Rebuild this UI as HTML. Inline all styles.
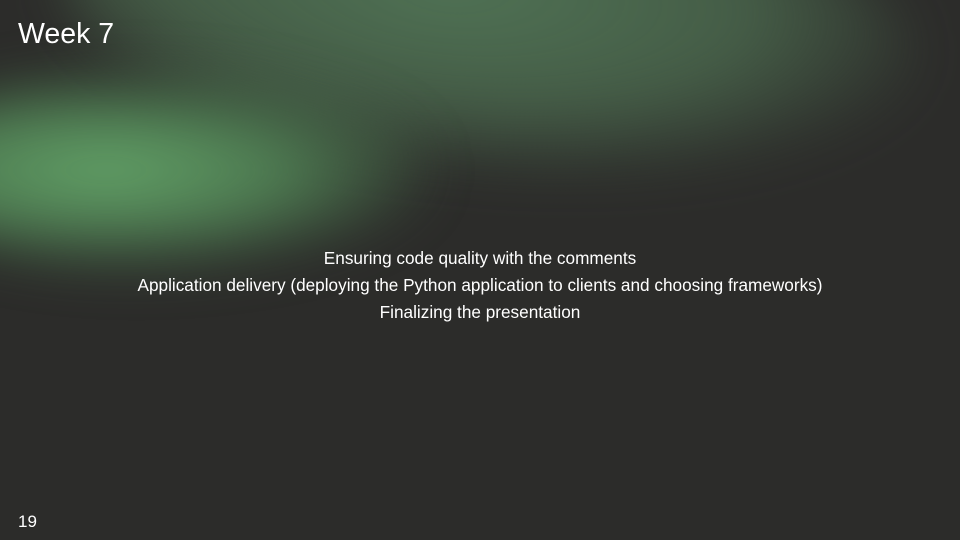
<!DOCTYPE html>
<html><head><style>
html,body{margin:0;padding:0}
body{width:960px;height:540px;overflow:hidden;position:relative;background:#2c2c2a;font-family:"Liberation Sans",sans-serif;color:#fff}
.g1{position:absolute;left:-110px;top:70px;width:540px;height:200px;border-radius:50%;background:radial-gradient(ellipse at 40% 50%,rgba(100,165,105,1) 0%,rgba(85,140,90,0.8) 40%,rgba(44,44,42,0) 75%);filter:blur(25px)}
.g2{position:absolute;left:60px;top:-130px;width:860px;height:300px;border-radius:50%;background:radial-gradient(ellipse at 45% 40%,rgba(80,115,85,1) 0%,rgba(75,105,78,0.8) 45%,rgba(44,44,42,0) 75%);filter:blur(25px);transform:rotate(6deg)}
.t{position:absolute;left:18px;top:18px;font-size:28.5px}
.c{position:absolute;left:0;width:960px;text-align:center;font-size:17.2px}
.n{position:absolute;left:18px;top:512px;font-size:17px}
</style></head><body>
<div class="g2"></div><div class="g1"></div>
<div class="t">Week 7</div>
<div class="c" style="top:248px">Ensuring code quality with the comments</div>
<div class="c" style="top:275px">Application delivery (deploying the Python application to clients and choosing frameworks)</div>
<div class="c" style="top:302px">Finalizing the presentation</div>
<div class="n">19</div>
</body></html>
